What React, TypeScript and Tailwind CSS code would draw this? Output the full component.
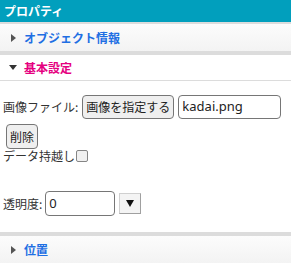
import React from "react";

const font = { fontFamily: '"Noto Sans CJK JP", "Noto Sans", sans-serif' };

const RightArrow = () => (
  <svg width="5" height="8" viewBox="0 0 5 8" className="ml-[11px] mr-[8px]">
    <path d="M0 0 L5 4 L0 8 Z" fill="#555" />
  </svg>
);

const DownArrow = () => (
  <svg width="8" height="5" viewBox="0 0 8 5" className="ml-[9px] mr-[7px]">
    <path d="M0 0 L8 0 L4 5 Z" fill="#333" />
  </svg>
);

const App: React.FC = () => {
  return (
    <div className="w-[291px] h-[264px] overflow-hidden bg-white text-[12px] text-[#333]" style={font}>
      <div className="h-[22px] bg-[#019fbd] flex items-center pl-[4px] text-white font-bold text-[12px]">
        プロパティ
      </div>
      <div className="h-[2px] bg-[#dcdcdc]" />
      <div className="h-[27px] bg-gradient-to-b from-[#fcfcfc] to-[#f3f3f3] flex items-center">
        <RightArrow />
        <span className="text-[#1f6fe3] font-bold">オブジェクト情報</span>
      </div>
      <div className="h-[4px] bg-[#dcdcdc]" />
      <div className="h-[26px] flex items-center border-b border-[#dcdcdc]">
        <DownArrow />
        <span className="text-[#e5007f] font-bold">基本設定</span>
      </div>

      <div className="pl-[3px] pt-[14px] h-[151px]">
        <div className="flex items-center h-[24px]">
          <span>画像ファイル:</span>
          <button className="ml-[4px] h-[24px] px-[3px] rounded-[4px] border border-[#767676] bg-[#efefef] text-[#222]">
            画像を指定する
          </button>
          <div className="ml-[4px] w-[103px] h-[24px] rounded-[4px] border border-[#767676] flex items-center pl-[3px] text-[13px] text-[#222]" style={{ fontFamily: '"Noto Sans", sans-serif' }}>
            kadai.png
          </div>
        </div>
        <div className="mt-[5px] ml-[3px]">
          <button className="h-[25px] px-[3px] rounded-[4px] border border-[#767676] bg-[#efefef] text-[#222]">
            削除
          </button>
        </div>
        <div className="flex items-center h-[15px] -mt-[1px]">
          <span>データ持越し</span>
          <span className="ml-[1px] w-[12px] h-[12px] rounded-[2px] border border-[#858585] bg-[#f0f0f0]" />
        </div>
        <div className="flex items-center mt-[28px] h-[25px]">
          <span>透明度:</span>
          <div className="ml-[3px] w-[70px] h-[25px] rounded-[4px] border border-[#767676] flex items-center pl-[3px] text-[13px] text-[#222]" style={{ fontFamily: '"Noto Sans", sans-serif' }}>
            0
          </div>
          <div className="ml-[4px] w-[22px] h-[21px] bg-[#f4f4f4] border border-[#d0d0d0] border-r-[#a0a0a0] border-b-[#a0a0a0] flex items-center justify-center">
            <svg width="8" height="7" viewBox="0 0 8 7">
              <path d="M0 0 L8 0 L4 7 Z" fill="#111" />
            </svg>
          </div>
        </div>
      </div>

      <div className="h-[4px] bg-[#dcdcdc]" />
      <div className="h-[27px] bg-gradient-to-b from-[#fcfcfc] to-[#f3f3f3] flex items-center">
        <RightArrow />
        <span className="text-[#1f6fe3] font-bold">位置</span>
      </div>
    </div>
  );
};

export default App;
